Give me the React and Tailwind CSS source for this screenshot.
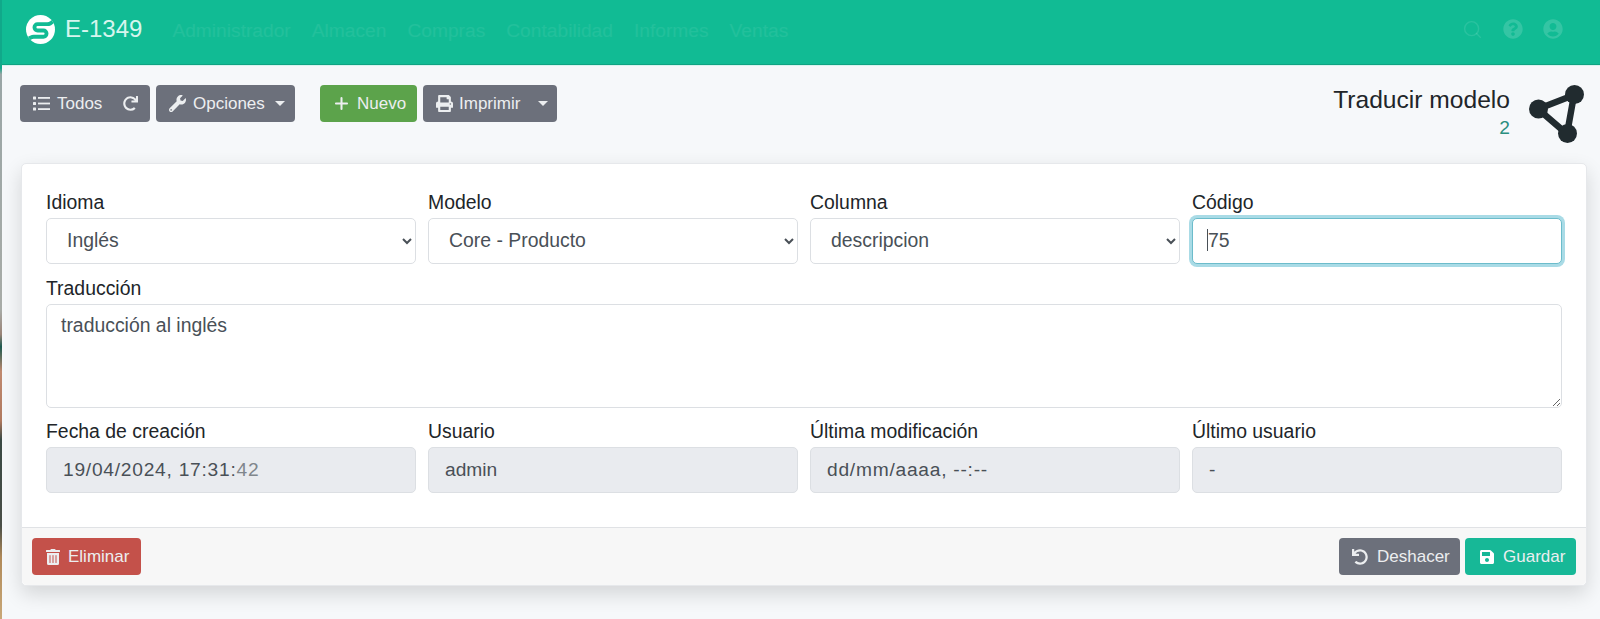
import React from "react";
import { FaRedo, FaWrench, FaPrint, FaTrashAlt, FaUndo, FaSave, FaQuestionCircle, FaUserCircle } from "react-icons/fa";
import { Plus, Search } from "lucide-react";

const Caret = () => <span className="inline-block w-0 h-0 border-x-[5px] border-x-transparent border-t-[5.5px] border-t-[#eceef0]" />;

const ListIcon = () => (
  <svg width="17" height="15" viewBox="0 0 17 15" className="mr-[7px] shrink-0" fill="currentColor">
    <rect x="0" y="0.5" width="3" height="3" rx="0.6" />
    <rect x="0" y="6" width="3" height="3" rx="0.6" />
    <rect x="0" y="11.5" width="3" height="3" rx="0.6" />
    <rect x="5" y="1" width="12" height="1.8" />
    <rect x="5" y="6.6" width="12" height="1.8" />
    <rect x="5" y="12.2" width="12" height="1.8" />
  </svg>
);

const Btn = ({ className = "", children }) => (
  <button className={`h-[37px] flex items-center rounded-[4px] text-[17px] text-[#eceef0] ${className}`}>{children}</button>
);

const Label = ({ children }) => <label className="block h-[25px] text-[19.4px] leading-[22px] text-[#212529]">{children}</label>;

const Sel = ({ label, value }) => (
  <div>
    <Label>{label}</Label>
    <select defaultValue={value} className="w-full h-[46px] mt-[2px] pl-[16px] pr-[2px] pb-[2px] bg-white border border-[#dcdfe3] rounded-[5px] text-[19.4px] text-[#495057] outline-none">
      <option value={value}>{value}</option>
    </select>
  </div>
);

const Dis = ({ label, className = "", children }) => (
  <div>
    <Label>{label}</Label>
    <div className={`w-full h-[46px] mt-[2px] flex items-center pl-[16px] bg-[#e9ebef] border border-[#dcdfe3] rounded-[5px] text-[19.2px] text-[#495057] ${className}`}>{children}</div>
  </div>
);

export default function App() {
  return (
    <div className="h-[619px] flex overflow-hidden bg-[#f6f8fa] font-['Liberation_Sans',Arial,sans-serif]">
      <div className="w-[2px] shrink-0 bg-[linear-gradient(180deg,#11a88a_0%,#11a88a_11%,#9aa6a6_12%,#a8aca8_50%,#9a8478_54%,#1d5a50_56%,#c08a70_60%,#b07a60_68%,#3a4a45_71%,#4a4f48_85%,#b08a5a_90%,#c9a878_100%)]" />
      <div className="flex-1 min-w-0 flex flex-col">
        <nav className="h-[65px] shrink-0 flex items-center bg-[#11bb94] border-b border-[#0fa382] pl-[24px] pr-[34px] pb-[6px]">
          <svg width="29" height="29" viewBox="0 0 30 30" className="shrink-0">
            <defs>
              <clipPath id="logo-clip"><circle cx="15" cy="15" r="15" /></clipPath>
            </defs>
            <circle cx="15" cy="15" r="15" fill="#fff" />
            <path d="M30 4 C27 8 25 9.5 22 9.5 H12 a3 3 0 0 0 0 6.5 h6 a3 3 0 0 1 0 6.5 H8 C5 22.5 3 24 0 27" fill="none" stroke="#11bb94" strokeWidth="4" clipPath="url(#logo-clip)" />
          </svg>
          <span className="ml-[10px] text-[24px] leading-none text-[#d6f5ee]">E-1349</span>
          <div className="ml-[30px] mt-[5px] flex gap-[21px] text-[19.2px] text-white/[0.07]">
            <span>Administrador</span><span>Almacen</span><span>Compras</span><span>Contabilidad</span><span>Informes</span><span>Ventas</span>
          </div>
          <div className="ml-auto mr-[3px] flex items-center gap-[20px]">
            <Search size={21} strokeWidth={1.6} className="text-white/10" />
            <FaQuestionCircle size={20} className="text-white/15" />
            <FaUserCircle size={20} className="text-white/15" />
          </div>
        </nav>

        <div className="h-[98px] shrink-0 flex items-start pt-[19px] pl-[18px] pr-[15px] border-t border-[#d8f3ee]">
          <Btn className="w-[130px] bg-[#6c707b] pl-[13px]">
            <ListIcon />Todos<FaRedo size={15} className="ml-[21px]" />
          </Btn>
          <Btn className="w-[139px] ml-[6px] bg-[#6c707b] pl-[13px]">
            <FaWrench size={17} className="mr-[7px]" />Opciones<span className="ml-[10px] flex"><Caret /></span>
          </Btn>
          <Btn className="w-[97px] ml-[25px] bg-[#5ca34b] pl-[12px]">
            <Plus size={19} strokeWidth={2.6} className="mr-[6px]" />Nuevo
          </Btn>
          <Btn className="w-[134px] ml-[6px] bg-[#6c707b] pl-[13px]">
            <FaPrint size={17} className="mr-[6px]" />Imprimir<span className="ml-[18px] flex"><Caret /></span>
          </Btn>
          <div className="ml-auto flex items-start">
            <div className="text-right">
              <div className="mt-[1px] text-[24.6px] leading-[28px] text-[#212529]">Traducir modelo</div>
              <div className="text-[19.2px] leading-[24px] mt-[2px] text-[#2a8f80]">2</div>
            </div>
            <svg width="56" height="58" viewBox="0 0 56 58" className="ml-[19px] shrink-0">
              <path d="M45 10 L9 24 L38 49 Z" fill="none" stroke="#212b2f" strokeWidth="6.5" strokeLinejoin="round" />
              <circle cx="45.5" cy="9.5" r="9.5" fill="#212b2f" />
              <circle cx="9.5" cy="24" r="9.5" fill="#212b2f" />
              <circle cx="38.5" cy="48.5" r="9.5" fill="#212b2f" />
            </svg>
          </div>
        </div>

        <div className="w-[1566px] ml-[19px] h-[423px] shrink-0 flex flex-col bg-white border border-[#e6e8eb] rounded-[5px] shadow-[0_8px_20px_rgba(0,0,0,0.14)]">
          <div className="flex-1 pl-[24px] pr-[24px] pt-[27px]">
            <div className="grid grid-cols-4 gap-x-[12px]">
              <Sel label="Idioma" value="Inglés" />
              <Sel label="Modelo" value="Core - Producto" />
              <Sel label="Columna" value="descripcion" />
              <div>
                <Label>Código</Label>
                <div className="relative mt-[2px]">
                  <input readOnly value="75" className="w-full h-[46px] pl-[15px] pb-[2px] bg-white border border-[#6cbccb] rounded-[5px] text-[19.4px] text-[#495057] outline-none shadow-[0_0_0_3px_#a9dbe6]" />
                  <span className="absolute left-[15px] top-[11px] w-px h-[22px] bg-[#495057]" />
                </div>
              </div>
            </div>
            <div className="mt-[13px]">
              <Label>Traducción</Label>
              <textarea readOnly defaultValue="traducción al inglés" className="block w-full h-[104px] mt-[2px] pl-[14px] pr-[15px] py-[7px] border border-[#dcdfe3] rounded-[5px] text-[19.4px] leading-[27px] text-[#495057] outline-none" />
            </div>
            <div className="grid grid-cols-4 gap-x-[12px] mt-[12px]">
              <Dis label="Fecha de creación" className="tracking-[0.75px]">19/04/2024, 17:31:<span className="text-[#80868c]">42</span></Dis>
              <Dis label="Usuario">admin</Dis>
              <Dis label="Última modificación" className="tracking-[0.75px]">dd/mm/aaaa, --:--</Dis>
              <Dis label="Último usuario">-</Dis>
            </div>
          </div>
          <div className="h-[58px] shrink-0 flex items-center px-[10px] bg-[#f7f7f7] border-t border-[#e0e2e5] rounded-b-[5px]">
            <Btn className="w-[109px] bg-[#c4514a] pl-[13px]">
              <FaTrashAlt size={16} className="mr-[7px]" />Eliminar
            </Btn>
            <Btn className="w-[121px] ml-auto bg-[#6c707b] pl-[13px]">
              <FaUndo size={16} className="mr-[9px]" />Deshacer
            </Btn>
            <Btn className="w-[111px] ml-[5px] bg-[#17b897] pl-[14px] text-[#c5f0e6]">
              <FaSave size={16} className="mr-[8px] text-white" />Guardar
            </Btn>
          </div>
        </div>
      </div>
    </div>
  );
}
